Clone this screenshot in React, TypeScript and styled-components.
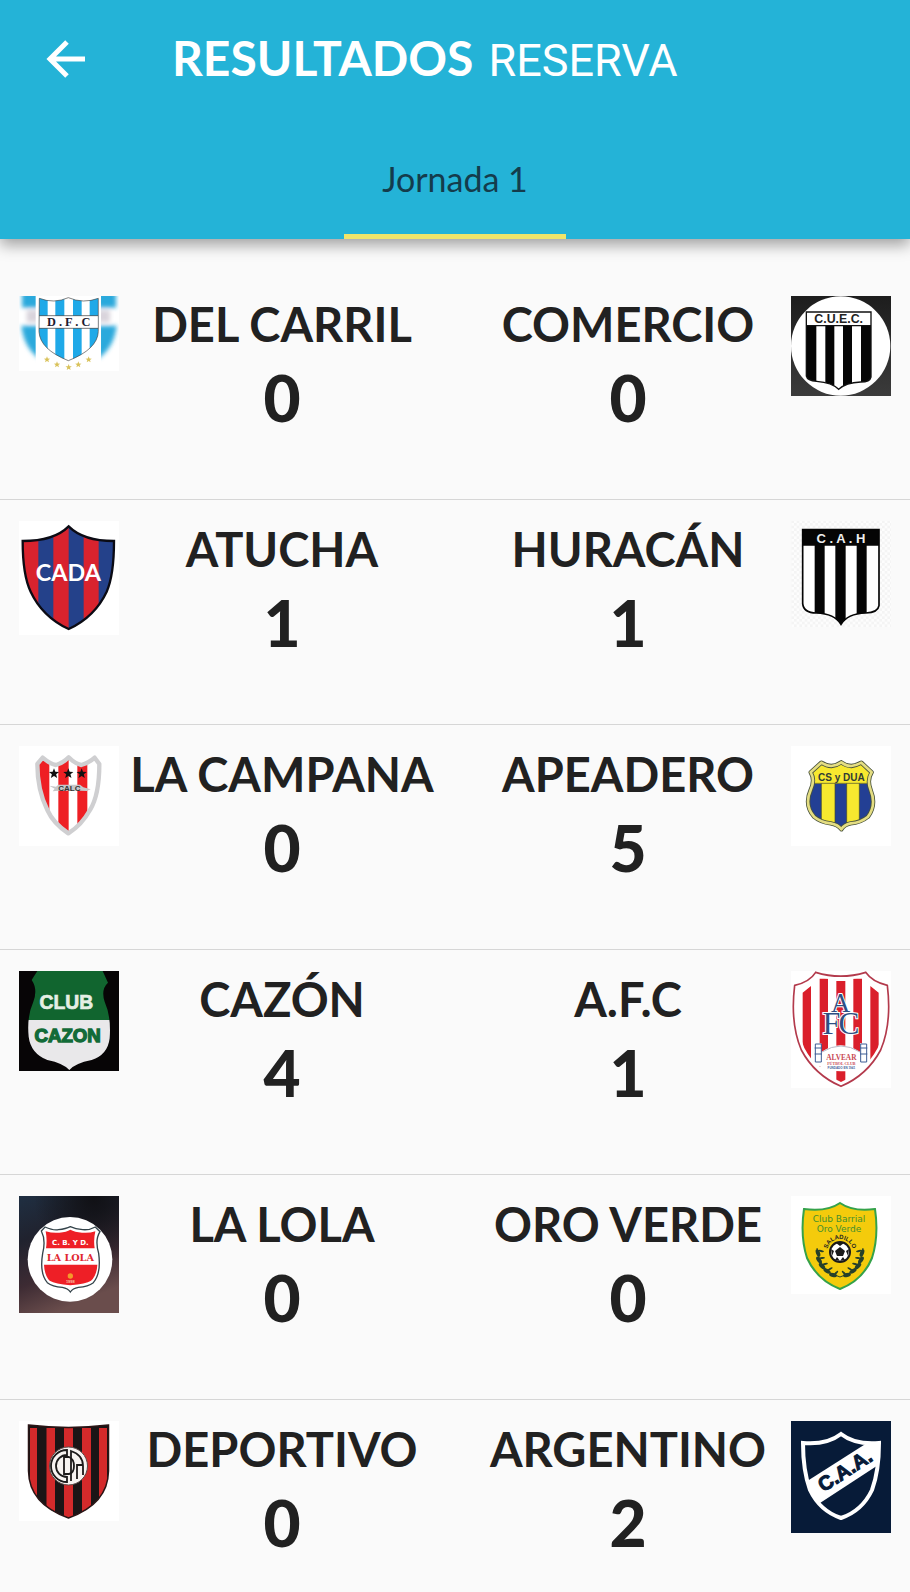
import React from "react";
import styled, { createGlobalStyle } from "styled-components";

const GlobalStyle = createGlobalStyle`
  *, *::before, *::after { box-sizing: border-box; }
  body {
    margin: 0;
    background: #fafafa;
    color: #212121;
    font-family: Lato, "Open Sans", sans-serif;
  }
`;

const Page = styled.div`
  width: 100%;
  overflow: hidden;
`;

const Header = styled.header`
  position: relative;
  background: #24b3d7;
  box-shadow: 0 6px 14px rgba(0, 0, 0, 0.36);
`;

const TitleBar = styled.div`
  display: flex;
  align-items: center;
  height: 118px;
  padding-left: 40px;
`;

const BackButton = styled.button`
  display: flex;
  padding: 0;
  border: 0;
  background: none;
  color: #fff;
  cursor: pointer;
`;

const Title = styled.h1`
  margin: 0 0 0 80px;
  color: #fff;
  font-size: 48px;
  font-weight: 700;
  line-height: 56px;
  white-space: nowrap;
`;

const Category = styled.span`
  margin-left: 15px;
  font-family: Roboto, sans-serif;
  font-size: 45px;
  font-weight: 400;
`;

const Tabs = styled.nav`
  display: flex;
  justify-content: center;
`;

const Tab = styled.button`
  width: 222px;
  height: 121px;
  padding: 6px 0 0;
  border: 0;
  border-bottom: 5px solid #f0e56a;
  background: none;
  color: #143c4c;
  font-family: inherit;
  font-size: 34px;
  line-height: 40px;
  cursor: pointer;
`;

const MatchList = styled.ul`
  margin: 0;
  padding: 36px 0 0;
  list-style: none;
`;

const Match = styled.li`
  display: grid;
  grid-template-columns: 100px minmax(0, 1fr) minmax(0, 1fr) 100px;
  align-items: start;
  min-height: 225px;
  padding: 21px 19px 0;
  border-bottom: 1px solid #d6d6d6;

  &:last-child {
    border-bottom: 0;
    min-height: 192px;
  }
`;

const Team = styled.div<{ $side: "home" | "away" }>`
  display: flex;
  flex-direction: column;
  align-items: center;
  padding-left: ${(p) => (p.$side === "away" ? "10px" : "0")};
  padding-right: ${(p) => (p.$side === "home" ? "10px" : "0")};
`;

const TeamName = styled.h2`
  margin: 0;
  font-size: 47px;
  font-weight: 700;
  line-height: 56px;
  white-space: nowrap;
`;

const Score = styled.span`
  font-size: 64px;
  font-weight: 900;
  line-height: 92px;
`;

const Crest = styled.svg`
  display: block;
  width: 100px;
  height: auto;
`;

const star = (cx: number, cy: number, r: number) =>
  Array.from({ length: 10 }, (_, i) => {
    const a = (Math.PI / 5) * i - Math.PI / 2;
    const d = i % 2 ? r * 0.42 : r;
    return `${cx + d * Math.cos(a)},${cy + d * Math.sin(a)}`;
  }).join(" ");

const DelCarril = () => (
  <Crest viewBox="27 33 300 225" role="img" aria-label="Del Carril">
    <defs>
      <filter id="dfcSoft"><feGaussianBlur stdDeviation="7" /></filter>
      <clipPath id="dfcShield"><path d="M88 40Q132 57 175 38Q220 57 265 40V140Q262 193 175 227Q90 193 87 140Z" /></clipPath>
      <clipPath id="dfcSides"><path d="M27 33H77V258H27ZM273 33H327V258H273Z" /></clipPath>
    </defs>
    <path fill="#fff" d="M27 33h300v225H27z" />
    <g clipPath="url(#dfcSides)">
      <g filter="url(#dfcSoft)">
        <path fill="#2aa9dc" d="M36 20H90V68H36ZM262 20H318V68H262Z" />
        <path fill="#d9d4dc" d="M50 76H90V112H50ZM262 76H300V112H262Z" />
        <path fill="#2aa9dc" d="M34 122H90V222Q42 190 34 122ZM262 122H320Q312 190 262 222Z" />
      </g>
    </g>
    <path fill="#fff" d="M78 33H272V258H78Z" />
    <g clipPath="url(#dfcShield)">
      <path fill="#1fa9e8" d="M87 33h26v200H87zM136 33h27v200h-27zM189 33h26v200h-26zM239 33h27v200h-27z" />
      <path fill="#fff" stroke="#333" strokeWidth="2" d="M80 92H272V130H80Z" />
    </g>
    <path fill="none" stroke="#444" strokeWidth="2" d="M88 40Q132 57 175 38Q220 57 265 40V140Q262 193 175 227Q90 193 87 140Z" />
    <text x="176" y="123" textAnchor="middle" fontFamily="Liberation Serif, serif" fontWeight="700" fontSize="37" fill="#1c1c30">D . F . C</text>
    {[[111, 224], [141, 239], [176, 247], [205, 239], [236, 224]].map(([x, y]) => (
      <polygon key={x} points={star(x, y, 10)} fill="#d9c25a" />
    ))}
  </Crest>
);

const Comercio = () => (
  <Crest viewBox="31 32 300 300" role="img" aria-label="Comercio">
    <defs>
      <linearGradient id="cuecBg" x1="0" y1="0" x2="0" y2="1">
        <stop offset="0" stopColor="#1d1d1d" />
        <stop offset="1" stopColor="#3b3b3b" />
      </linearGradient>
      <clipPath id="cuecShield"><path d="M77 80H271V275Q268 290 240 290Q195 292 174 312Q155 292 108 288Q80 286 77 272Z" /></clipPath>
    </defs>
    <path fill="url(#cuecBg)" d="M31 32h300v300H31z" />
    <circle cx="180" cy="182" r="149" fill="#fff" />
    <g clipPath="url(#cuecShield)">
      <path fill="#050505" d="M77 120h30v200H77zM134 120h27v200h-27zM187 120h27v200h-27zM241 120h32v200h-32z" />
    </g>
    <path fill="none" stroke="#111" strokeWidth="4" d="M77 80H271V275Q268 290 240 290Q195 292 174 312Q155 292 108 288Q80 286 77 272ZM77 121H271" />
    <text x="174" y="113" textAnchor="middle" fontFamily="Liberation Sans, sans-serif" fontWeight="700" fontSize="37" fill="#222">C.U.E.C.</text>
  </Crest>
);

const cadaShape = "M176 34Q220 78 312 78Q312 180 290 230Q255 305 176 342Q97 305 62 230Q38 180 38 78Q132 78 176 34Z";
const Atucha = () => (
  <Crest viewBox="27 18 300 342" role="img" aria-label="Atucha">
    <defs><clipPath id="cadaShield"><path d={cadaShape} /></clipPath></defs>
    <path fill="#fff" d="M27 18h300v342H27z" />
    <g clipPath="url(#cadaShield)">
      <path fill="#d9232e" d="M27 18h300v342H27z" />
      <path fill="#24418a" d="M85 18h45v342H85zM176 18h45v342h-45zM266 18h60v342h-60z" />
    </g>
    <path d={cadaShape} fill="none" stroke="#0b0b14" strokeWidth="7" />
    <text x="175" y="197" textAnchor="middle" fontFamily="Lato, sans-serif" fontWeight="700" fontSize="70" fill="#fff">CADA</text>
  </Crest>
);

const cahShape = "M66 44H295V272Q292 293 255 294Q200 296 181 328Q162 296 107 294Q68 293 66 265Z";
const Huracan = () => (
  <Crest viewBox="31 18 300 318" role="img" aria-label="Huracán">
    <defs>
      <clipPath id="cahShield"><path d={cahShape} /></clipPath>
      <pattern id="cahDots" width="16" height="16" patternUnits="userSpaceOnUse">
        <path fill="#f4f4f4" d="M0 0h8v8H0zM8 8h8v8H8z" />
      </pattern>
    </defs>
    <path fill="#fdfdfd" d="M31 18h300v318H31z" />
    <path fill="url(#cahDots)" d="M31 18h300v318H31z" />
    <g clipPath="url(#cahShield)">
      <path fill="#fff" d="M60 40h240v300H60z" />
      <path fill="#050505" d="M60 40h240v52H60zM102 90h30v250h-30zM164 90h31v250h-31zM228 90h30v250h-30z" />
    </g>
    <path d={cahShape} fill="none" stroke="#050505" strokeWidth="5" />
    <text x="181" y="83" textAnchor="middle" fontFamily="Liberation Sans, sans-serif" fontWeight="700" fontSize="39" fill="#eee">C . A . H</text>
  </Crest>
);

const calcShape = "M98 53Q122 73 138 75Q158 70 176 52Q196 72 214 75Q235 70 254 53L268 72Q268 165 240 210Q215 255 175 280Q130 250 112 210Q82 150 82 72Z";
const LaCampana = () => (
  <Crest viewBox="27 18 300 300" role="img" aria-label="La Campana">
    <defs><clipPath id="calcShield"><path d={calcShape} /></clipPath></defs>
    <path fill="#fff" d="M27 18h300v300H27z" />
    <g clipPath="url(#calcShield)">
      <path fill="#ee1f24" d="M84 40h34v260H84zM145 40h31v260h-31zM202 40h30v260h-30z" />
    </g>
    <path d={calcShape} fill="none" stroke="#cfcfd1" strokeWidth="13" strokeLinejoin="round" />
    <path fill="#c7c7c9" d="M118 137L138 140L145 134H210L220 142L242 148L230 153L210 152H146L128 154L134 146Z" />
    <text x="178" y="152" textAnchor="middle" fontFamily="Liberation Sans, sans-serif" fontWeight="700" fontSize="24" fill="#333">CALC</text>
    {[132, 175, 215].map((x) => <polygon key={x} points={star(x, 101, 16)} fill="#111" />)}
  </Crest>
);

const csShape = "M122 68Q138 78 152 78Q170 76 182 67Q196 78 212 78Q228 76 242 68L273 97Q258 120 270 150Q288 195 262 230Q240 248 210 250Q190 254 182 268Q172 254 150 250Q120 247 100 230Q70 195 90 150Q104 120 90 97Z";
const Apeadero = () => (
  <Crest viewBox="31 18 300 300" role="img" aria-label="Apeadero">
    <defs><clipPath id="csShield"><path d={csShape} /></clipPath></defs>
    <path fill="#fff" d="M31 18h300v300H31z" />
    <g clipPath="url(#csShield)">
      <path fill="#f7e82f" d="M60 50h240v230H60z" />
      <path fill="#233f94" d="M60 131h62v150H60zM163 131h35v150h-35zM236 131h60v150h-60z" />
      <path d="M60 130H300M122 130V260M163 130V260M198 130V260M236 130V260" stroke="#44482c" strokeWidth="2" />
    </g>
    <path d={csShape} fill="none" stroke="#48523c" strokeWidth="13" strokeLinejoin="round" />
    <path d={csShape} fill="none" stroke="#e4dd82" strokeWidth="8" strokeLinejoin="round" />
    <text x="182" y="122" textAnchor="middle" fontFamily="Liberation Sans, sans-serif" fontWeight="700" fontSize="30" fill="#303a36">CS y DUA</text>
  </Crest>
);

const Cazon = () => (
  <Crest viewBox="27 33 300 300" role="img" aria-label="Cazón">
    <defs><clipPath id="cazonShield"><path d="M82 33H278L294 68Q272 88 284 125Q304 170 299 235Q293 285 245 300Q195 310 178 330Q160 310 112 300Q62 280 56 230Q50 170 70 125Q84 88 65 60Z" /></clipPath></defs>
    <path fill="#070506" d="M27 33h300v300H27z" />
    <g clipPath="url(#cazonShield)">
      <path fill="#11652f" d="M40 33h270v148H40z" />
      <path fill="#e9e8ea" d="M40 180h270v160H40z" />
    </g>
    <text x="169" y="148" textAnchor="middle" fontFamily="Liberation Sans, sans-serif" fontWeight="700" fontSize="58" fill="#e5eee5" stroke="#e5eee5" strokeWidth="2">CLUB</text>
    <text x="173" y="246" textAnchor="middle" fontFamily="Liberation Sans, sans-serif" fontWeight="700" fontSize="56" fill="#126b38" stroke="#126b38" strokeWidth="4">CAZON</text>
  </Crest>
);

const afcShape = "M105 37Q180 60 255 37Q275 66 320 76Q334 190 300 270Q260 345 181 379Q102 345 62 270Q28 190 42 76Q87 66 105 37Z";
const Afc = () => (
  <Crest viewBox="31 33 300 351" role="img" aria-label="A.F.C">
    <defs><clipPath id="afcShield"><path d="M108 50Q180 66 252 50Q272 74 310 86Q322 190 291 264Q254 333 181 366Q108 333 71 264Q40 190 52 86Q90 74 108 50Z" /></clipPath></defs>
    <path fill="#fff" d="M31 33h300v351H31z" />
    <path d={afcShape} fill="#fff" stroke="#b33a4c" strokeWidth="5" />
    <g clipPath="url(#afcShield)" fill="#da1f2b">
      <path d="M66 98L91 78V310L66 265ZM117 56H142V320H117ZM167 63H194V380H167ZM218 56H244V320H218ZM269 78L294 98V265L269 310Z" />
    </g>
    <path fill="#fff" d="M103 278V250H122V276Q180 235 238 276V250H260V300Q248 334 181 334Q112 332 103 300Z" />
    <g fontFamily="Liberation Serif, serif" textAnchor="middle" fill="#2d4f84" stroke="#fff" strokeWidth="6" paintOrder="stroke">
      <text x="152" y="223" fontSize="96">F</text>
      <text x="205" y="222" fontSize="94">C</text>
      <text x="180" y="156" fontSize="80">A</text>
    </g>
    <g fill="none" stroke="#3d5c94" strokeWidth="3">
      <path d="M104 252H122V306H104ZM102 264H124M102 282H124M240 252H258V306H240ZM238 264H260M238 282H260" />
      <path d="M124 276Q181 240 238 276" stroke="#b9b9c8" />
    </g>
    <text x="182" y="301" textAnchor="middle" fontFamily="Liberation Serif, serif" fontWeight="700" fontSize="22" fill="#c94a56">ALVEAR</text>
    <text x="182" y="315" textAnchor="middle" fontFamily="Liberation Serif, serif" fontWeight="700" fontSize="12" fill="#c94a56">FÚTBOL CLUB</text>
    <text x="182" y="328" textAnchor="middle" fontFamily="Liberation Sans, sans-serif" fontWeight="700" fontSize="9" fill="#45609a">FUNDADO EN 1941</text>
  </Crest>
);

const LaLola = () => (
  <Crest viewBox="27 18 300 352" role="img" aria-label="La Lola">
    <defs>
      <linearGradient id="lolaBg" x1="0" y1="0" x2="0.35" y2="1">
        <stop offset="0" stopColor="#1f2f42" />
        <stop offset="0.35" stopColor="#20222e" />
        <stop offset="0.7" stopColor="#3d2b33" />
        <stop offset="1" stopColor="#6a4d4c" />
      </linearGradient>
      <radialGradient id="lolaDark" cx="0.75" cy="0" r="0.6">
        <stop offset="0" stopColor="#101014" />
        <stop offset="1" stopColor="#101014" stopOpacity="0" />
      </radialGradient>
    </defs>
    <path fill="url(#lolaBg)" d="M27 18h300v352H27z" />
    <path fill="url(#lolaDark)" d="M27 18h300v352H27z" />
    <circle cx="180" cy="208" r="127" fill="#fff" />
    <path fill="#fff" stroke="#34434a" strokeWidth="4" d="M94 123L105 111Q130 122 145 119Q168 117 181 110Q196 117 218 119Q238 121 256 111L270 125Q254 150 266 190Q274 250 250 278Q235 290 205 292Q188 295 181 306Q174 295 157 292Q127 290 112 278Q88 250 98 190Q108 150 94 123Z" />
    <path fill="#ee1f26" d="M107 124Q128 130 148 128Q170 126 181 119Q194 126 216 128Q238 130 256 124Q250 150 254 175H108Q112 150 107 124ZM102 224H262Q260 258 243 272Q228 281 181 286Q136 281 119 272Q104 258 102 224Z" />
    <text x="181" y="165" textAnchor="middle" fontFamily="DejaVu Sans, sans-serif" fontWeight="700" fontSize="21" fill="#fff">C. B. Y D.</text>
    <text x="181" y="212" textAnchor="middle" fontFamily="DejaVu Serif, serif" fontWeight="700" fontSize="29" fill="#df2731">LA LOLA</text>
    <circle cx="181" cy="258" r="8" fill="#f49a2a" />
    <text x="181" y="279" textAnchor="middle" fontFamily="Liberation Sans, sans-serif" fontWeight="700" fontSize="12" fill="#f7c0a0">1998</text>
  </Crest>
);

const oroLeaves = [[-22, 2, 70], [-21, 9, 55], [-18, 15, 45], [-13, 20, 30], [-7, 24, 15]];
const OroVerde = () => (
  <Crest viewBox="0 0 100 98" role="img" aria-label="Oro Verde">
    <defs><path id="oroArc" d="M36 56A13 13 0 0 1 62 56" /></defs>
    <path fill="#fff" d="M0 0h100v98H0z" />
    <path fill="#f4cb0c" stroke="#35a24a" strokeWidth="2" d="M49 7Q62 16 84 13Q88 40 81 62Q72 84 49 93Q26 84 16 62Q9 40 13 13Q36 16 49 7Z" />
    <g fontFamily="DejaVu Sans, sans-serif" fontSize="9" textAnchor="middle" fill="#458f2c">
      <text x="48" y="26">Club Barrial</text>
      <text x="48" y="36">Oro Verde</text>
    </g>
    <text fontFamily="Liberation Sans, sans-serif" fontWeight="700" fontSize="6" fill="#222"><textPath href="#oroArc" startOffset="50%" textAnchor="middle">SALADILLO</textPath></text>
    <circle cx="49" cy="56" r="10" fill="#fff" stroke="#1a1a1a" strokeWidth="2" />
    <path fill="#1a1a1a" d="M49 51L54 55L52 60H46L44 55ZM45 47H53L49 50ZM40 53L43 55L41 60ZM58 53L55 55L57 60ZM44 64L46 61L49 65ZM54 64L52 61L49 65Z" />
    <path d="M26 52Q28 76 49 81Q70 76 72 52" fill="none" stroke="#26402a" strokeWidth="1" />
    {oroLeaves.map(([dx, dy, a]) => (
      <g key={dx} fill="#26402a">
        <ellipse cx={49 + dx} cy={55 + dy} rx="4" ry="2" transform={`rotate(${a} ${49 + dx} ${55 + dy})`} />
        <ellipse cx={49 + dx + 3} cy={55 + dy - 2} rx="3" ry="1" transform={`rotate(${a - 60} ${49 + dx + 3} ${55 + dy - 2})`} />
        <ellipse cx={49 - dx} cy={55 + dy} rx="4" ry="2" transform={`rotate(${-a} ${49 - dx} ${55 + dy})`} />
        <ellipse cx={49 - dx - 3} cy={55 + dy - 2} rx="3" ry="1" transform={`rotate(${60 - a} ${49 - dx - 3} ${55 + dy - 2})`} />
      </g>
    ))}
  </Crest>
);

const deportivoShape = "M9.5 4Q49.5 9 89.5 4V50Q89 83 49.5 97Q10 83 9.5 50Z";
const Deportivo = () => (
  <Crest viewBox="0 0 100 100" role="img" aria-label="Deportivo">
    <defs><clipPath id="depShield"><path d={deportivoShape} /></clipPath></defs>
    <path fill="#fff" d="M0 0h100v100H0z" />
    <g clipPath="url(#depShield)">
      <path fill="#1b1516" d="M0 0h100v100H0z" />
      <path fill="#d42a2b" d="M11 7h7v93h-7zM27.500 7h8.500v93h-8.500zM45 7h9v93h-9zM63 7h9v93h-9zM80 7h8v93h-8z" />
    </g>
    <path d={deportivoShape} fill="none" stroke="#2a1516" strokeWidth="1.500" />
    <circle cx="49.500" cy="45" r="19" fill="#f7f3f1" stroke="#5a4a48" strokeWidth="1" />
    <g fill="none" stroke="#1c1a1a" strokeWidth="1.800">
      <path d="M48 29A16 16 0 0 0 48 61V56A11 11 0 0 1 48 34Z" />
      <path d="M45 36H50Q55 38 55 45Q55 52 50 53H45Z" />
      <path d="M52 60V30Q64 34 64 45V54M58 58V44H64" />
    </g>
  </Crest>
);

const Argentino = () => (
  <Crest viewBox="0 0 100 112" role="img" aria-label="Argentino">
    <defs><clipPath id="caaShield"><path d="M50 13Q64 24 88 22Q88 50 81 69Q71 90 50 97Q29 90 19 69Q12 50 12 22Q36 24 50 13Z" /></clipPath></defs>
    <path fill="#071b38" d="M0 0h100v112H0z" />
    <path fill="#fff" clipPath="url(#caaShield)" d="M10 64L76 22L92 14V41L26 84Z" />
    <path fill="none" stroke="#fff" strokeWidth="4" d="M50 13Q64 24 88 22Q88 50 81 69Q71 90 50 97Q29 90 19 69Q12 50 12 22Q36 24 50 13Z" />
    <text x="55" y="56" transform="rotate(-33 55 51)" textAnchor="middle" fontFamily="Liberation Sans, sans-serif" fontWeight="700" fontSize="20" fill="#071b38" stroke="#071b38" strokeWidth="1">C.A.A.</text>
  </Crest>
);

interface Side {
  name: string;
  score: number;
  Logo: React.FC;
}

const matches: { home: Side; away: Side }[] = [
  { home: { name: "DEL CARRIL", score: 0, Logo: DelCarril }, away: { name: "COMERCIO", score: 0, Logo: Comercio } },
  { home: { name: "ATUCHA", score: 1, Logo: Atucha }, away: { name: "HURACÁN", score: 1, Logo: Huracan } },
  { home: { name: "LA CAMPANA", score: 0, Logo: LaCampana }, away: { name: "APEADERO", score: 5, Logo: Apeadero } },
  { home: { name: "CAZÓN", score: 4, Logo: Cazon }, away: { name: "A.F.C", score: 1, Logo: Afc } },
  { home: { name: "LA LOLA", score: 0, Logo: LaLola }, away: { name: "ORO VERDE", score: 0, Logo: OroVerde } },
  { home: { name: "DEPORTIVO", score: 0, Logo: Deportivo }, away: { name: "ARGENTINO", score: 2, Logo: Argentino } },
];

export default function App() {
  return (
    <Page>
      <GlobalStyle />
      <Header>
        <TitleBar>
          <BackButton type="button" aria-label="Volver">
            <svg width="52" height="52" viewBox="0 0 52 52" fill="none" stroke="currentColor" strokeWidth="5">
              <path d="M45 26H11M27 9L10 26L27 43" />
            </svg>
          </BackButton>
          <Title>
            RESULTADOS<Category>RESERVA</Category>
          </Title>
        </TitleBar>
        <Tabs>
          <Tab type="button" aria-current="page">Jornada 1</Tab>
        </Tabs>
      </Header>
      <MatchList>
        {matches.map(({ home, away }) => (
          <Match key={home.name}>
            <home.Logo />
            <Team $side="home">
              <TeamName>{home.name}</TeamName>
              <Score>{home.score}</Score>
            </Team>
            <Team $side="away">
              <TeamName>{away.name}</TeamName>
              <Score>{away.score}</Score>
            </Team>
            <away.Logo />
          </Match>
        ))}
      </MatchList>
    </Page>
  );
}
